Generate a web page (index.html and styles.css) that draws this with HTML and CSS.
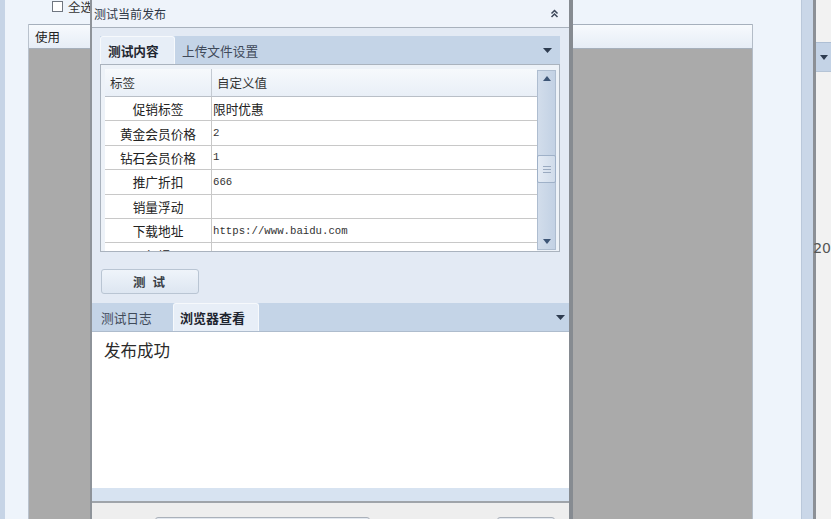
FILE: index.html
```html
<!DOCTYPE html>
<html lang="zh-CN">
<head>
    <meta charset="UTF-8">
    <meta name="viewport" content="width=device-width, initial-scale=1.0">
    <title>测试当前发布</title>
    <link rel="stylesheet" href="styles.css">
</head>
<body>
    <div class="desk">
        <div class="edge-left"></div>
        <div class="workspace">
            <div class="toolbar">
                <label class="check"><span class="check-box"></span>全选</label>
            </div>
            <div class="list">
                <div class="list-head"><span>使用</span></div>
                <div class="list-body"></div>
            </div>
        </div>
        <div class="splitter"></div>
        <div class="split-line"></div>
        <div class="side-pane">
            <div class="side-combo">
                <svg width="8" height="5" viewBox="0 0 8 5"><polygon points="0,0 8,0 4,5" fill="#2e3c50"/></svg>
            </div>
            <div class="side-num">20</div>
        </div>
    </div>

    <div class="dialog">
        <div class="dlg-title">
            <span>测试当前发布</span>
            <svg class="collapse" width="9" height="9" viewBox="0 0 9 9">
                <path d="M1.5 4.5 L4.5 1.5 L7.5 4.5 M1.5 8 L4.5 5 L7.5 8" fill="none" stroke="#3c4658" stroke-width="1.5"/>
            </svg>
        </div>

        <div class="dlg-body">
            <div class="tabs">
                <div class="tab active">测试内容</div>
                <div class="tab">上传文件设置</div>
                <svg class="tab-menu" width="9" height="5" viewBox="0 0 9 5"><polygon points="0,0 9,0 4.5,5" fill="#2e3c50"/></svg>
            </div>

            <div class="prop-panel">
                <div class="prop-grid">
                    <div class="prop-head">标签</div>
                    <div class="prop-head value">自定义值</div>

                    <div class="prop-key">促销标签</div>
                    <div class="prop-val">限时优惠</div>
                    <div class="prop-key">黄金会员价格</div>
                    <div class="prop-val mono">2</div>
                    <div class="prop-key">钻石会员价格</div>
                    <div class="prop-val mono">1</div>
                    <div class="prop-key">推广折扣</div>
                    <div class="prop-val mono">666</div>
                    <div class="prop-key">销量浮动</div>
                    <div class="prop-val"></div>
                    <div class="prop-key">下载地址</div>
                    <div class="prop-val mono">https://www.baidu.com</div>
                    <div class="prop-key">运行提示</div>
                    <div class="prop-val"></div>
                </div>
                <div class="scrollbar">
                    <svg class="sb-arrow" width="8" height="5" viewBox="0 0 8 5"><polygon points="0,5 8,5 4,0" fill="#3d5576"/></svg>
                    <div class="sb-track">
                        <div class="sb-thumb"><i></i><i></i><i></i></div>
                    </div>
                    <svg class="sb-arrow" width="8" height="5" viewBox="0 0 8 5"><polygon points="0,0 8,0 4,5" fill="#3d5576"/></svg>
                </div>
            </div>

            <div class="test-row">
                <button class="btn">测 试</button>
            </div>
        </div>

        <div class="log-tabs">
            <div class="tab">测试日志</div>
            <div class="tab active">浏览器查看</div>
            <svg class="tab-menu" width="9" height="5" viewBox="0 0 9 5"><polygon points="0,0 9,0 4.5,5" fill="#2e3c50"/></svg>
        </div>
        <div class="log-view">发布成功</div>
        <div class="log-status"></div>
        <div class="dlg-footer">
            <span class="foot-btn wide"></span>
            <span class="foot-btn small"></span>
        </div>
    </div>
</body>
</html>
```

FILE: styles.css
```css
* {
    box-sizing: border-box;
}
body {
    margin: 0;
    width: 831px;
    height: 519px;
    overflow: hidden;
    position: relative;
    font-family: "Noto Sans CJK SC", "Noto Sans", sans-serif;
    font-size: 12px;
    color: #222;
    background: #eef4fb;
}

/* background window */
.desk {
    display: flex;
    height: 519px;
}
.edge-left {
    width: 5px;
    background: #c6d4e6;
}
.workspace {
    width: 800px;
    padding-left: 23px;
    display: flex;
    flex-direction: column;
    background: #eef4fb;
}
.toolbar {
    height: 24px;
}
.check {
    display: flex;
    align-items: center;
    gap: 5px;
    margin-top: -2px;
    padding-left: 24px;
    height: 16px;
    font-size: 12.5px;
    color: #333;
}
.check-box {
    width: 11px;
    height: 11px;
    border: 1px solid #6f7680;
    background: #fff;
}
.list {
    width: 725px;
    flex: 1;
    display: flex;
    flex-direction: column;
    border-left: 1px solid #b9c2cd;
    border-right: 1px solid #b3bcc7;
}
.list-head {
    height: 25px;
    display: flex;
    align-items: center;
    padding-left: 6px;
    border-top: 1px solid #a6b0bc;
    border-bottom: 1px solid #a6b0bc;
    background: linear-gradient(#f7fafd, #e6edf6);
    font-size: 12.5px;
}
.list-body {
    flex: 1;
    background: #aaaaaa;
}
.splitter {
    width: 12px;
    background: #cad7e8;
    border-left: 1px solid #bac8da;
}
.split-line {
    width: 3px;
    background: #8c9096;
}
.side-pane {
    flex: 1;
    background: #f2f2f2;
}
.side-combo {
    margin-top: 42px;
    height: 30px;
    display: flex;
    align-items: center;
    padding-left: 4px;
    background: #c4d3e6;
    border-top: 1px solid #aebfd4;
    border-bottom: 1px solid #b5c4d6;
}
.side-num {
    margin-top: 168px;
    margin-left: -3px;
    font-family: "DejaVu Sans", sans-serif;
    font-size: 14px;
    color: #555;
}

/* dialog window */
.dialog {
    position: absolute;
    left: 90px;
    top: 0;
    width: 483px;
    height: 519px;
    display: flex;
    flex-direction: column;
    background: #e3eaf4;
    border-left: 2px solid #8e9399;
    border-right: 4px solid #868b91;
}
.dlg-title {
    height: 28px;
    flex: none;
    display: flex;
    align-items: center;
    justify-content: space-between;
    padding: 0 10px 0 2px;
    background: #eef3fa;
    border-bottom: 1px solid #a8b1bc;
    font-size: 12px;
    color: #2f3847;
}
.dlg-body {
    padding: 8px 9px 0 8px;
}

.tabs,
.log-tabs {
    display: flex;
    align-items: stretch;
    background: #c4d4e7;
}
.tabs {
    height: 28px;
}
.tab {
    display: flex;
    align-items: center;
    font-size: 12.7px;
    color: #3f4a5a;
}
.tab.active {
    font-weight: bold;
    color: #1f2630;
    background: #e7eef7;
    border: 1px solid #f6f9fc;
    border-bottom: none;
    border-radius: 3px 3px 0 0;
}
.tabs .tab.active {
    width: 75px;
    padding-left: 7px;
}
.tabs .tab {
    padding-left: 7px;
}
.tab-menu {
    margin-left: auto;
    align-self: center;
    margin-right: 8px;
}

.prop-panel {
    height: 188px;
    display: flex;
    padding: 4px 3px 0 4px;
    background: #edf2f8;
    border: 1px solid #aab3be;
}
.prop-grid {
    flex: 1;
    height: 182px;
    overflow: hidden;
    display: grid;
    grid-template-columns: 107px 1fr;
    grid-auto-rows: 24.4px;
    grid-template-rows: 28px;
    background: #fff;
}
.prop-head {
    display: flex;
    align-items: flex-end;
    padding: 0 0 4px 5px;
    background: linear-gradient(#f6f9fc, #e9eff7);
    border-right: 1px solid #c4cad2;
    border-bottom: 1px solid #b9bfc7;
    font-size: 12.5px;
    color: #333;
}
.prop-head.value {
    border-right: none;
}
.prop-key,
.prop-val {
    display: flex;
    align-items: center;
    border-bottom: 1px solid #c8c8c8;
    font-size: 12.7px;
}
.prop-key {
    justify-content: center;
    border-right: 1px solid #c8c8c8;
}
.prop-val {
    padding-left: 1px;
}
.prop-val.mono {
    font-family: "Liberation Mono", monospace;
    font-size: 10.7px;
    color: #333;
}

.scrollbar {
    width: 19px;
    height: 180px;
    margin-top: 1px;
    display: flex;
    flex-direction: column;
    align-items: center;
    padding: 5px 0;
    background: linear-gradient(90deg, #d2ddeb, #c2d1e4);
    border: 1px solid #aebdd0;
}
.sb-track {
    flex: 1;
    width: 100%;
    padding-top: 74px;
}
.sb-thumb {
    height: 28px;
    margin: 0 -1px;
    display: flex;
    flex-direction: column;
    justify-content: center;
    align-items: center;
    gap: 2px;
    background: linear-gradient(90deg, #e4ebf4, #cfdbea);
    border: 1px solid #9fb1c8;
    border-radius: 2px;
}
.sb-thumb i {
    width: 8px;
    height: 1px;
    background: #9aaac0;
}

.test-row {
    padding: 17px 0 0 1px;
}
.btn {
    width: 98px;
    height: 25px;
    border: 1px solid #b9c5d3;
    border-radius: 3px;
    background: linear-gradient(#eff4fa, #dde6f1);
    font-family: "Noto Sans CJK SC", sans-serif;
    font-size: 12.5px;
    font-weight: bold;
    letter-spacing: 2px;
    color: #3a3f47;
}

.log-tabs {
    height: 29px;
    flex: none;
    margin-top: 9px;
    border-bottom: 1px solid #aebccd;
}
.log-tabs .tab {
    width: 81px;
    padding-left: 9px;
}
.log-tabs .tab.active {
    width: 86px;
    padding-left: 6px;
    font-size: 13px;
}
.log-tabs .tab-menu {
    margin-right: 4px;
}
.log-view {
    height: 156px;
    flex: none;
    padding: 7px 12px;
    background: #fff;
    font-size: 16.5px;
    line-height: 22px;
    color: #2a2a2a;
}
.log-status {
    height: 13px;
    flex: none;
    background: #d7e3f1;
}
.dlg-footer {
    flex: 1;
    display: flex;
    align-items: flex-start;
    padding-top: 14px;
    background: #eeeeee;
    border-top: 2px solid #9fa4aa;
}
.foot-btn {
    height: 10px;
    border: 1px solid #aab1ba;
    border-radius: 3px;
    background: #e3e8ef;
}
.foot-btn.wide {
    width: 215px;
    margin-left: 63px;
}
.foot-btn.small {
    width: 58px;
    margin-left: 127px;
}
```
